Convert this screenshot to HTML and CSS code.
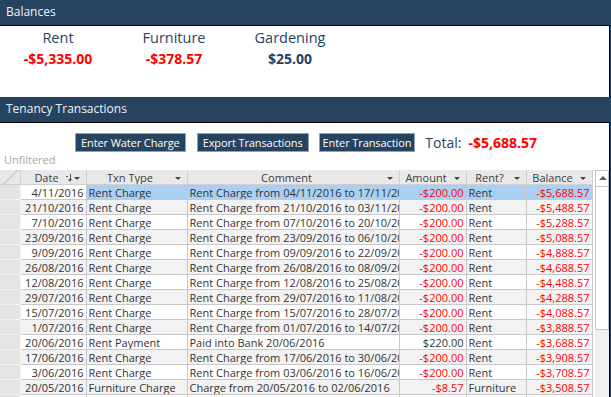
FILE: index.html
```html
<!DOCTYPE html>
<html lang="en">
  <head>
    <meta charset="UTF-8" />
    <meta name="viewport" content="width=device-width, initial-scale=1.0" />
    <title>Tenancy</title>
    <link rel="stylesheet" href="styles.css">
  </head>

  <body>
    <div class="section-title">Balances</div>
    <div class="panel balances">
      <div class="balance">
        <div class="balance-label">Rent</div>
        <div class="balance-value neg">-$5,335.00</div>
      </div>
      <div class="balance">
        <div class="balance-label">Furniture</div>
        <div class="balance-value neg">-$378.57</div>
      </div>
      <div class="balance">
        <div class="balance-label">Gardening</div>
        <div class="balance-value">$25.00</div>
      </div>
    </div>

    <div class="section-title">Tenancy Transactions</div>
    <div class="panel transactions">
      <div class="toolbar">
        <button class="btn">Enter Water Charge</button>
        <button class="btn">Export Transactions</button>
        <button class="btn">Enter Transaction</button>
        <span class="total-label">Total:</span>
        <span class="total-value">-$5,688.57</span>
      </div>
      <div class="filter-state">Unfiltered</div>

      <div class="sheet">
        <table class="grid">
          <colgroup>
            <col style="width: 20px" />
            <col style="width: 66px" />
            <col style="width: 101px" />
            <col style="width: 212px" />
            <col style="width: 67px" />
            <col style="width: 60px" />
            <col style="width: 66px" />
          </colgroup>
          <thead>
            <tr>
              <th class="corner"></th>
              <th>Date<span class="sort"></span><span class="drop"></span></th>
              <th>Txn Type<span class="drop"></span></th>
              <th>Comment<span class="drop"></span></th>
              <th>Amount<span class="drop"></span></th>
              <th>Rent?<span class="drop"></span></th>
              <th>Balance<span class="drop"></span></th>
            </tr>
          </thead>
          <tbody id="rows"></tbody>
        </table>
        <div class="scrollbar">
          <div class="scroll-up"></div>
          <div class="scroll-thumb"></div>
          <div class="scroll-track"></div>
        </div>
      </div>
    </div>

    <script>
      const rows = [
        ["4/11/2016", "Rent Charge", "Rent Charge from 04/11/2016 to 17/11/2016", "-$200.00", "Rent", "-$5,688.57"],
        ["21/10/2016", "Rent Charge", "Rent Charge from 21/10/2016 to 03/11/2016", "-$200.00", "Rent", "-$5,488.57"],
        ["7/10/2016", "Rent Charge", "Rent Charge from 07/10/2016 to 20/10/2016", "-$200.00", "Rent", "-$5,288.57"],
        ["23/09/2016", "Rent Charge", "Rent Charge from 23/09/2016 to 06/10/2016", "-$200.00", "Rent", "-$5,088.57"],
        ["9/09/2016", "Rent Charge", "Rent Charge from 09/09/2016 to 22/09/2016", "-$200.00", "Rent", "-$4,888.57"],
        ["26/08/2016", "Rent Charge", "Rent Charge from 26/08/2016 to 08/09/2016", "-$200.00", "Rent", "-$4,688.57"],
        ["12/08/2016", "Rent Charge", "Rent Charge from 12/08/2016 to 25/08/2016", "-$200.00", "Rent", "-$4,488.57"],
        ["29/07/2016", "Rent Charge", "Rent Charge from 29/07/2016 to 11/08/2016", "-$200.00", "Rent", "-$4,288.57"],
        ["15/07/2016", "Rent Charge", "Rent Charge from 15/07/2016 to 28/07/2016", "-$200.00", "Rent", "-$4,088.57"],
        ["1/07/2016", "Rent Charge", "Rent Charge from 01/07/2016 to 14/07/2016", "-$200.00", "Rent", "-$3,888.57"],
        ["20/06/2016", "Rent Payment", "Paid into Bank 20/06/2016", "$220.00", "Rent", "-$3,688.57"],
        ["17/06/2016", "Rent Charge", "Rent Charge from 17/06/2016 to 30/06/2016", "-$200.00", "Rent", "-$3,908.57"],
        ["3/06/2016", "Rent Charge", "Rent Charge from 03/06/2016 to 16/06/2016", "-$200.00", "Rent", "-$3,708.57"],
        ["20/05/2016", "Furniture Charge", "Charge from 20/05/2016 to 02/06/2016", "-$8.57", "Furniture", "-$3,508.57"],
        ["6/05/2016", "Rent Charge", "Rent Charge from 06/05/2016 to 19/05/2016", "-$200.00", "Rent", "-$3,500.00"],
      ];

      const body = document.getElementById("rows");
      rows.forEach((row, i) => {
        const tr = document.createElement("tr");
        if (i === 0) tr.classList.add("selected");
        if (i % 2 === 1) tr.classList.add("alt");
        tr.innerHTML =
          `<td class="selector"></td>` +
          `<td class="num date">${row[0]}</td>` +
          `<td>${row[1]}</td>` +
          `<td class="clip">${row[2]}</td>` +
          `<td class="num${row[3].startsWith("-") ? " neg" : ""}">${row[3]}</td>` +
          `<td>${row[4]}</td>` +
          `<td class="num neg">${row[5]}</td>`;
        body.appendChild(tr);
      });
    </script>
  </body>
</html>
```

FILE: styles.css
```css
body {
  margin: 0;
  height: 397px;
  overflow: hidden;
  background-color: #26435f;
  font-family: "Open Sans", "Noto Sans", sans-serif;
}

.section-title {
  height: 25px;
  padding-left: 6px;
  line-height: 24px;
  font-size: 12px;
  color: #eef2f7;
}

.panel {
  width: 609px;
  background-color: #fff;
  border-top: 1px solid #000;
  border-right: 1px solid #000;
}

.balances {
  height: 71px;
  display: flex;
}

.balance {
  width: 116px;
  padding-top: 2px;
  text-align: center;
}

.balance-label {
  font-size: 14.5px;
  line-height: 20px;
  color: #26435f;
}

.balance-value {
  font-size: 14px;
  font-weight: bold;
  line-height: 21px;
  color: #26435f;
}

.neg {
  color: #ff0000;
}

.transactions {
  height: 275px;
}

.toolbar {
  display: flex;
  align-items: center;
  padding: 10px 0 0 75px;
  height: 19px;
}

.btn {
  height: 19px;
  margin: 0 10px 0 0;
  padding: 0 5px;
  background-color: #26435f;
  color: #fff;
  border: 1px solid #8ea2ba;
  font-family: inherit;
  font-size: 11px;
  letter-spacing: -0.1px;
  line-height: 16px;
}

.btn:first-child {
  margin-right: 11px;
}

.btn:nth-child(3) {
  padding: 0 3px;
}

.total-label {
  margin-left: 0;
  font-size: 14px;
  color: #26435f;
}

.total-value {
  margin-left: 7px;
  font-size: 14px;
  font-weight: bold;
  color: #ff0000;
}

.filter-state {
  padding-left: 4px;
  height: 18px;
  line-height: 15px;
  font-size: 11px;
  color: #a6a6a6;
}

.sheet {
  display: flex;
  gap: 2px;
}

.grid {
  width: 592px;
  table-layout: fixed;
  border-collapse: collapse;
  font-size: 11px;
  color: #333;
}

.grid th,
.grid td {
  height: 14px;
  padding: 0 2px;
  border: 1px solid #c8c8c8;
  white-space: nowrap;
  overflow: hidden;
  line-height: 13px;
}

.grid td.clip {
  text-overflow: clip;
}

.grid tr > :first-child {
  border-left: none;
}

.grid th {
  position: relative;
  padding-right: 15px;
  background-color: #e8e8e8;
  border-color: #d0d0d0;
  border-top: none;
  font-weight: normal;
  color: #404040;
}

.grid th.corner {
  background: linear-gradient(135deg, #e8e8e8 48%, #c9c9c9 50%, #e8e8e8 60%);
  padding: 0;
}

.drop {
  position: absolute;
  right: 6px;
  top: 7px;
  border-left: 3px solid transparent;
  border-right: 3px solid transparent;
  border-top: 3px solid #444;
}

.sort {
  position: absolute;
  right: 15px;
  top: 4px;
  width: 1px;
  height: 7px;
  background-color: #555;
}

.sort::before {
  content: "";
  position: absolute;
  left: -4px;
  top: 2px;
  width: 2px;
  height: 1px;
  background-color: #555;
}

.sort::after {
  content: "";
  position: absolute;
  left: -2px;
  bottom: -1px;
  border-left: 2.5px solid transparent;
  border-right: 2.5px solid transparent;
  border-top: 3px solid #555;
}

.grid td.selector {
  background-color: #e4e4e4;
  border-color: #f2f2f2;
}

.grid tr.alt td {
  background-color: #f2f2f2;
}

.grid tr.alt td.selector {
  background-color: #e4e4e4;
}

.grid tr.selected td {
  background-color: #a9d0f2;
}

.grid tr.selected td.selector {
  background-color: #e4e4e4;
}

.grid tr.selected td.date {
  background-color: #fff;
}

.grid td.num {
  text-align: right;
}

.grid td.neg {
  color: #ff0000;
}

.scrollbar {
  width: 14px;
  display: flex;
  flex-direction: column;
}

.scroll-up {
  position: relative;
  height: 15px;
  border: 1px solid #c4c4c4;
  background-color: #fff;
}

.scroll-up::after {
  content: "";
  position: absolute;
  left: 3px;
  top: 5px;
  border-left: 4px solid transparent;
  border-right: 4px solid transparent;
  border-bottom: 4px solid #606060;
}

.scroll-thumb {
  height: 142px;
  border: 1px solid #c4c4c4;
  border-top: none;
  background-color: #fff;
}

.scroll-track {
  flex: 1;
  background-color: #f0f0f0;
}
```
